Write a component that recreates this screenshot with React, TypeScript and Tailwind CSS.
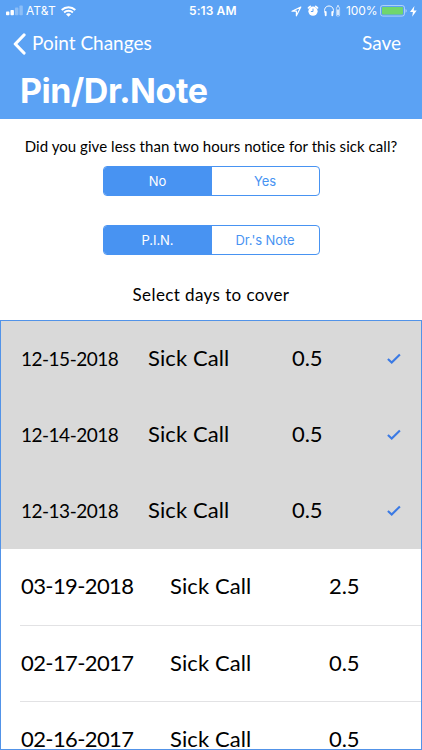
import React from "react";

const avenir = "font-['Lato','Open_Sans',sans-serif] font-normal";
const sf = "font-['Inter','Liberation_Sans',sans-serif]";

type Day = { date: string; points: string; selected?: boolean };

const days: Day[] = [
  { date: "12-15-2018", points: "0.5", selected: true },
  { date: "12-14-2018", points: "0.5", selected: true },
  { date: "12-13-2018", points: "0.5", selected: true },
  { date: "03-19-2018", points: "2.5" },
  { date: "02-17-2017", points: "0.5" },
  { date: "02-16-2017", points: "0.5" },
];

function StatusBar() {
  return (
    <div className={`flex h-[22px] items-center font-normal text-white ${sf}`}>
      <div className="flex w-[189px] items-center pl-[6px]">
        <svg width="18" height="12" viewBox="0 0 18 12" fill="white">
          <rect x="0" y="6.6" width="3.4" height="3.6" rx="0.8" />
          <rect x="4.5" y="5" width="3.4" height="5.2" rx="0.8" />
          <rect x="9" y="2.6" width="3.4" height="7.6" rx="0.8" opacity="0.3" />
          <rect x="13.4" y="0.6" width="3.4" height="9.6" rx="0.8" opacity="0.3" />
        </svg>
        <span className="ml-[2px] w-[35px] whitespace-nowrap text-[12px] leading-[22px] tracking-[0.1px]">AT&amp;T</span>
        <svg width="15" height="11" viewBox="0 0 15 11" fill="none" stroke="white" strokeWidth="2">
          <path d="M0.7 4C4.6 0.3 10.4 0.3 14.3 4" />
          <path d="M3.1 6.5C5.6 4.2 9.4 4.2 11.9 6.5" />
          <path d="M5 8.2C6.4 7 8.6 7 10 8.2L7.5 10.7Z" fill="white" stroke="none" />
        </svg>
      </div>
      <span className="w-[102px] whitespace-nowrap text-[12px] font-semibold leading-[22px] tracking-[0.1px]">5:13 AM</span>
      <svg className="shrink-0" width="11" height="11" viewBox="0 0 11 11" fill="none" stroke="white" strokeWidth="1.2" strokeLinejoin="round">
        <path d="M9.8 1L1 5.2H5.4V9.8Z" />
      </svg>
      <svg className="ml-[5px] shrink-0" width="12" height="12" viewBox="0 0 12 12" fill="white">
        <circle cx="6" cy="6.2" r="4.6" />
        <path d="M1.4 3A9 9 0 0 1 3.3 1.3M8.7 1.3A9 9 0 0 1 10.6 3" stroke="white" strokeWidth="1.6" strokeLinecap="round" />
        <path d="M6 3.6V6.5H3.9" fill="none" stroke="#5ba2f4" strokeWidth="1" />
      </svg>
      <svg className="ml-[4px] shrink-0" width="18" height="12" viewBox="0 0 18 12" fill="none" stroke="white">
        <path d="M2.4 10V8.7C0.2 3.9 2.8 1 6 1S11.8 3.9 9.6 8.7V10" strokeWidth="1" />
        <path d="M2.7 7V10.3M9.3 7V10.3" strokeWidth="1.8" strokeLinecap="round" />
        <rect x="13.4" y="2" width="3.2" height="9" rx="0.8" strokeWidth="0.8" opacity="0.7" />
        <path d="M15 4.5V10M14.3 1H15.7" strokeWidth="1.5" />
      </svg>
      <span className="ml-[5px] w-[34px] whitespace-nowrap text-[12px] leading-[22px] tracking-[-0.1px]">100%</span>
      <svg className="shrink-0" width="27" height="12" viewBox="0 0 27 12">
        <rect x="0.5" y="0.5" width="24" height="10.6" rx="2.3" fill="none" stroke="white" opacity="0.5" />
        <rect x="2" y="2" width="21" height="7.6" rx="1" fill="#70d66d" />
        <path d="M25.5 4A2 2 0 0 1 25.5 7.7Z" fill="white" opacity="0.5" />
      </svg>
      <svg className="ml-[3px] shrink-0" width="7" height="11" viewBox="0 0 7 11" fill="white">
        <path d="M4.4 0L0 6.1H2.9L2.2 10.8L6.7 4.4H3.7Z" />
      </svg>
    </div>
  );
}

function Segmented({ options }: { options: [string, string] }) {
  return (
    <div className={`mx-auto flex h-[30px] w-[217px] overflow-hidden rounded-[4px] border border-[#4893f2] bg-white text-[13px] font-normal leading-[28px] tracking-[-0.1px] ${sf}`}>
      <div className="w-[108px] bg-[#4893f2] text-center text-white">{options[0]}</div>
      <div className="flex-1 text-center text-[#4893f2]">{options[1]}</div>
    </div>
  );
}

function DayRow({ day }: { day: Day }) {
  if (day.selected) {
    return (
      <div className="flex h-[76px] shrink-0 items-baseline bg-[#d9d9d9] pl-[20px] leading-[73px]">
        <span className="w-[127px] text-[19px] tracking-[-0.5px]">{day.date}</span>
        <span className="w-[144px] text-[22px] tracking-[0.1px]">Sick Call</span>
        <span className="w-[95px] text-[22px] tracking-[-0.1px]">{day.points}</span>
        <svg className="self-center" width="14" height="12" viewBox="0 0 14 12" fill="none" stroke="#3b7ae4" strokeWidth="2.1">
          <path d="M0.9 6L4.7 9.6L12.9 1.4" />
        </svg>
      </div>
    );
  }
  return (
    <div className="flex h-[76.6px] shrink-0 pl-[19px] leading-[74px]">
      <div className="flex h-full flex-1 border-b border-[#e2e2e4] pl-px text-[22px]">
        <span className="w-[149px] tracking-[-0.6px]">{day.date}</span>
        <span className="w-[159px] tracking-[0.1px]">Sick Call</span>
        <span className="tracking-[-0.1px]">{day.points}</span>
      </div>
    </div>
  );
}

export default function App() {
  return (
    <div className={`flex h-[750px] w-[422px] flex-col overflow-hidden bg-white text-black [font-variant-ligatures:none] ${avenir}`}>
      <header className="h-[119px] shrink-0 bg-[#5ba2f4] text-white">
        <StatusBar />
        <div className="flex h-[43px] items-center pl-[13px] pr-[21px] text-[19px]">
          <svg width="13" height="22" viewBox="0 0 13 22" fill="none" stroke="white" strokeWidth="3.2" strokeLinecap="round" strokeLinejoin="round">
            <path d="M11 2L2.3 11L11 20" />
          </svg>
          <span className="ml-[6px] flex-1">Point Changes</span>
          <span>Save</span>
        </div>
        <h1 className={`pl-[20px] text-[34px] font-bold leading-[52px] tracking-[-0.45px] ${sf}`}>Pin/Dr.Note</h1>
      </header>
      <main className="flex min-h-0 flex-1 flex-col">
        <p className="mt-[15px] h-[32px] whitespace-nowrap text-center text-[15px] leading-[24px] tracking-[0.05px]">
          Did you give less than two hours notice for this sick call?
        </p>
        <Segmented options={["No", "Yes"]} />
        <div className="h-[29px]" />
        <Segmented options={["P.I.N.", "Dr.'s Note"]} />
        <p className="h-[65px] pt-[26px] text-center text-[17px] leading-[28px] tracking-[0.4px]">Select days to cover</p>
        <div className="flex min-h-0 flex-1 flex-col overflow-hidden border border-[#5293e8]">
          {days.map((day) => (
            <DayRow key={day.date} day={day} />
          ))}
        </div>
      </main>
    </div>
  );
}
